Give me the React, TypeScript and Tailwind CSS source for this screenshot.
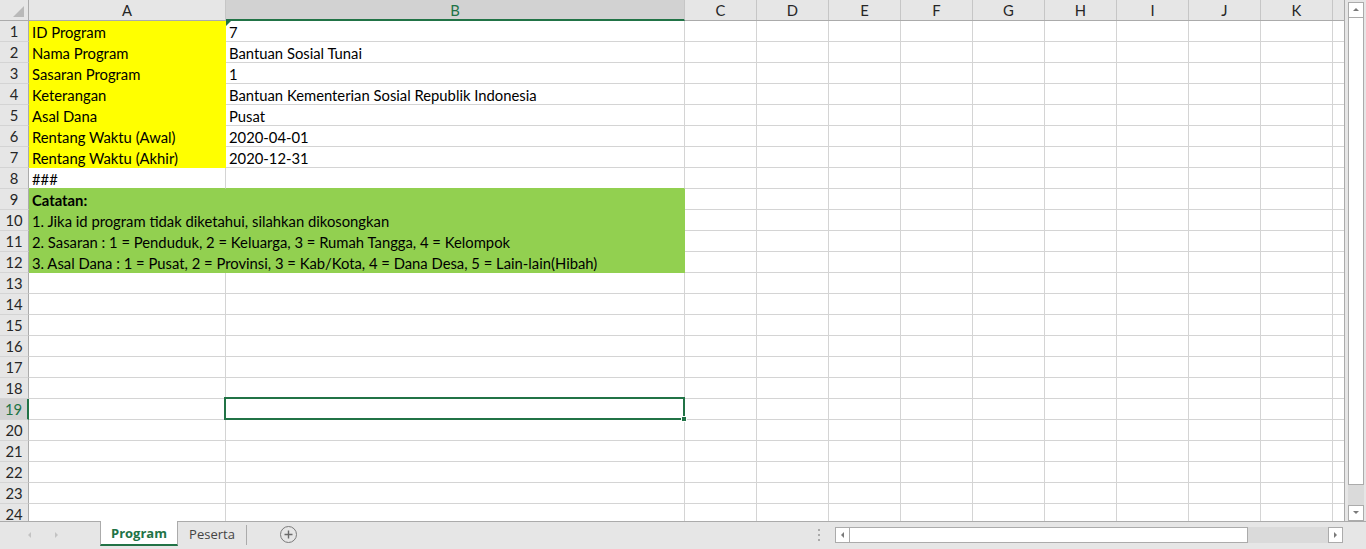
import React from 'react';

type Fill = 'yellow' | 'green' | null;

interface Col {
  label: string;
  width: number;
}

const COLS: Col[] = [
  { label: 'A', width: 197 },
  { label: 'B', width: 459 },
  { label: 'C', width: 72 },
  { label: 'D', width: 72 },
  { label: 'E', width: 72 },
  { label: 'F', width: 72 },
  { label: 'G', width: 72 },
  { label: 'H', width: 72 },
  { label: 'I', width: 72 },
  { label: 'J', width: 72 },
  { label: 'K', width: 72 },
  { label: '', width: 40 },
];

const FILL_BG: Record<string, string> = {
  yellow: 'bg-[#ffff00]',
  green: 'bg-[#92d050]',
};

const BORDER_R: Record<string, string> = {
  yellow: 'border-r-[#ffff00]',
  green: 'border-r-[#92d050]',
  none: 'border-r-[#d4d4d4]',
};

const BORDER_B: Record<string, string> = {
  yellow: 'border-b-[#ffff00]',
  green: 'border-b-[#92d050]',
  none: 'border-b-[#d4d4d4]',
};

// isi sel: [kolom A, kolom B]
const DATA: Record<number, [string, string]> = {
  1: ['ID Program', '7'],
  2: ['Nama Program', 'Bantuan Sosial Tunai'],
  3: ['Sasaran Program', '1'],
  4: ['Keterangan', 'Bantuan Kementerian Sosial Republik Indonesia'],
  5: ['Asal Dana', 'Pusat'],
  6: ['Rentang Waktu (Awal)', '2020-04-01'],
  7: ['Rentang Waktu (Akhir)', '2020-12-31'],
  8: ['###', ''],
  9: ['Catatan:', ''],
  10: ['1. Jika id program tidak diketahui, silahkan dikosongkan', ''],
  11: ['2. Sasaran : 1 = Penduduk, 2 = Keluarga, 3 = Rumah Tangga, 4 = Kelompok', ''],
  12: ['3. Asal Dana : 1 = Pusat, 2 = Provinsi, 3 = Kab/Kota, 4 = Dana Desa, 5 = Lain-lain(Hibah)', ''],
};

const getFill = (row: number, col: number): Fill => {
  if (row >= 1 && row <= 7 && col === 0) return 'yellow';
  if (row >= 9 && row <= 12 && (col === 0 || col === 1)) return 'green';
  return null;
};

const ROWS = Array.from({ length: 24 }, (_, i) => i + 1);
const SEL_ROW = 19;
const SEL_COL = 1;

const Cell: React.FC<{ row: number; col: number; width: number }> = ({ row, col, width }) => {
  const fill = getFill(row, col);
  const rightFill = fill ?? getFill(row, col + 1) ?? 'none';
  const bottomFill = fill ?? getFill(row + 1, col) ?? 'none';
  const text = col < 2 ? DATA[row]?.[col] ?? '' : '';

  return (
    <div
      style={{ width }}
      className={`relative shrink-0 h-[21px] border-r border-b ${fill ? FILL_BG[fill] : 'bg-white'} ${BORDER_R[rightFill]} ${BORDER_B[bottomFill]}`}
    >
      {text && (
        <span
          className={`relative z-10 block pl-[3px] pt-[1px] leading-[20px] whitespace-nowrap text-[14.8px] text-black ${
            row === 9 ? 'font-bold' : ''
          }`}
        >
          {text}
        </span>
      )}
      {row === 1 && col === 1 && (
        <div className="absolute left-0 top-0 z-10 w-0 h-0 border-t-[5px] border-t-[#217346] border-r-[5px] border-r-transparent" />
      )}
      {row === SEL_ROW && col === SEL_COL && (
        <>
          <div className="absolute -left-[2px] -top-[2px] w-[461px] h-[23px] border-2 border-[#217346] z-20" />
          <div className="absolute left-[455px] top-[17px] w-[6px] h-[6px] bg-[#217346] border border-white z-30" />
        </>
      )}
    </div>
  );
};

const Triangle: React.FC<{ dir: 'up' | 'down' | 'left' | 'right'; color?: string }> = ({ dir, color = '#7a7a7a' }) => {
  const pts = {
    up: '1,5 4,2 7,5',
    down: '1,2 4,5 7,2',
    left: '5,1 2,4 5,7',
    right: '2,1 5,4 2,7',
  }[dir];
  return (
    <svg width="8" height="8" viewBox="0 0 8 8">
      <polygon points={pts} fill={color} />
    </svg>
  );
};

export default function App() {
  return (
    <div
      className="w-[1366px] h-[549px] overflow-hidden bg-[#e6e6e6] flex flex-col select-none"
      style={{ fontFamily: 'Lato, "Open Sans", sans-serif' }}
    >
      <div className="flex h-[522px] border-b border-[#ababab]">
        {/* area grid */}
        <div className="w-[1345px] overflow-hidden border-r border-[#ababab] bg-white">
          {/* header kolom */}
          <div className="flex h-[21px] bg-[#e6e6e6] border-b border-[#ababab]">
            <div className="relative shrink-0 w-[29px] h-[20px] border-r border-[#ababab]">
              <div className="absolute right-[4px] bottom-[3px] w-0 h-0 border-l-[11px] border-l-transparent border-b-[11px] border-b-[#b9b9b9]" />
            </div>
            {COLS.map((c, i) => (
              <div
                key={i}
                style={{ width: c.width }}
                className={`shrink-0 flex items-center justify-center pt-[1px] text-[14.8px] border-r border-[#c6c6c6] ${
                  i === SEL_COL
                    ? 'h-[21px] bg-[#d2d2d2] text-[#217346] border-b-2 border-b-[#217346]'
                    : 'h-[20px] text-[#262626]'
                }`}
              >
                {c.label}
              </div>
            ))}
          </div>

          {ROWS.map((r) => (
            <div key={r} className="flex">
              <div
                className={`shrink-0 w-[29px] h-[21px] flex items-center justify-center pt-[1px] text-[14.8px] border-b border-b-[#d4d4d4] ${
                  r === SEL_ROW
                    ? 'bg-[#d2d2d2] text-[#217346] border-r-2 border-r-[#217346]'
                    : 'bg-[#e6e6e6] text-[#262626] border-r border-r-[#ababab]'
                }`}
              >
                {r}
              </div>
              {COLS.map((c, i) => (
                <Cell key={i} row={r} col={i} width={c.width} />
              ))}
            </div>
          ))}
        </div>

        {/* scrollbar vertikal */}
        <div className="w-[21px] flex flex-col items-center pt-[2px] bg-[#e6e6e6]">
          <div className="w-[16px] h-[16px] bg-white border border-[#ababab] flex items-center justify-center">
            <Triangle dir="up" />
          </div>
          <div className="w-[16px] h-[467px] bg-white border border-[#ababab] border-t-0" />
          <div className="w-[16px] flex-1 bg-[#dadada]" />
          <div className="w-[16px] h-[16px] bg-white border border-[#ababab] flex items-center justify-center">
            <Triangle dir="down" />
          </div>
        </div>
      </div>

      {/* bar sheet bawah */}
      <div className="flex h-[27px] items-start">
        <div className="flex items-center gap-[19px] w-[100px] h-[25px] pl-[26px]">
          <Triangle dir="left" color="#c3c3c3" />
          <Triangle dir="right" color="#c3c3c3" />
        </div>
        <div
          className="h-[25px] w-[78px] -mt-[1px] pt-[2px] bg-white border-x border-[#ababab] border-b-2 border-b-[#217346] flex items-center justify-center text-[13px] font-bold text-[#217346]"
          style={{ fontFamily: '"Open Sans", sans-serif' }}
        >
          Program
        </div>
        <div
          className="h-[25px] w-[68px] pt-[1px] flex items-center justify-center text-[13px] text-[#444]"
          style={{ fontFamily: '"Open Sans", sans-serif' }}
        >
          Peserta
        </div>
        <div className="w-px h-[20px] mt-[3px] bg-[#ababab]" />
        <div className="ml-[33px] mt-[4px] w-[17px] h-[17px] rounded-full border border-[#7a7a7a] flex items-center justify-center">
          <svg width="9" height="9" viewBox="0 0 9 9">
            <path d="M4.5 0.5v8M0.5 4.5h8" stroke="#6a6a6a" strokeWidth="1.4" />
          </svg>
        </div>
        <div className="ml-[521px] mt-[7px] flex flex-col gap-[3px]">
          <span className="w-[2px] h-[2px] bg-[#aaa]" />
          <span className="w-[2px] h-[2px] bg-[#aaa]" />
          <span className="w-[2px] h-[2px] bg-[#aaa]" />
        </div>
        {/* scrollbar horizontal */}
        <div className="ml-[15px] mt-[5px] flex h-[16px] w-[508px] bg-[#dadada]">
          <div className="w-[15px] h-[16px] bg-white border border-[#ababab] flex items-center justify-center">
            <Triangle dir="left" />
          </div>
          <div className="w-[398px] h-[16px] bg-white border border-[#ababab] border-l-0" />
          <div className="flex-1" />
          <div className="w-[15px] h-[16px] bg-white border border-[#ababab] flex items-center justify-center">
            <Triangle dir="right" />
          </div>
        </div>
      </div>
    </div>
  );
}
